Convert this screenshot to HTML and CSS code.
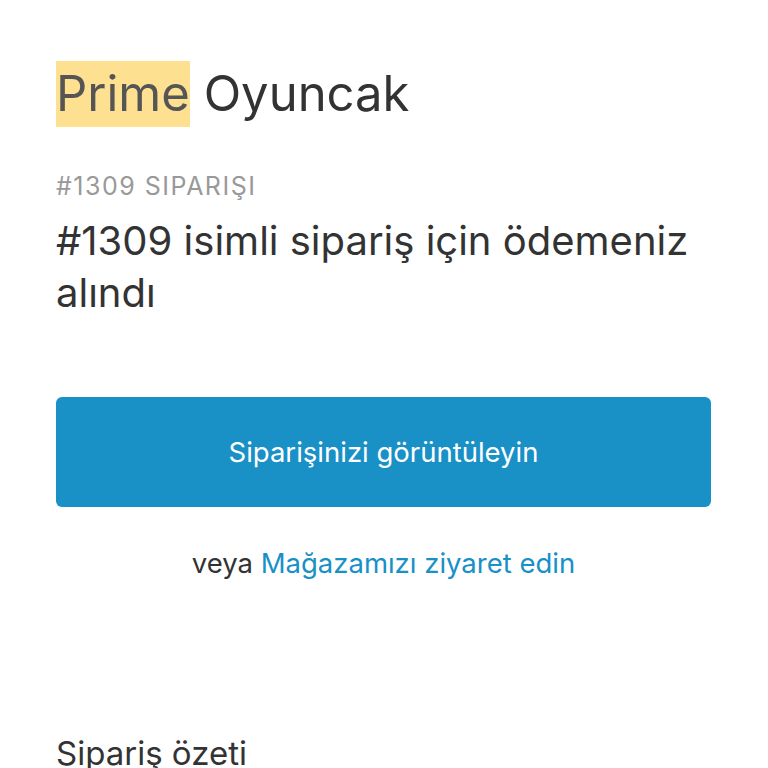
FILE: index.html
```html
<!DOCTYPE html>
<html lang="tr">
<head>
<meta charset="utf-8">
<link rel="stylesheet" href="styles.css">
</head>
<body>
<div class="page">
  <h1 class="shop"><span class="mark">Prime</span> Oyuncak</h1>
  <p class="order-no">#1309 SIPARIŞI</p>
  <h2 class="title">#1309 isimli sipariş için ödemeniz alındı</h2>
  <a class="btn" href="#">Siparişinizi görüntüleyin</a>
  <p class="alt">veya <a class="link" href="#">Mağazamızı ziyaret edin</a></p>
  <h3 class="summary">Sipariş özeti</h3>
</div>
</body>
</html>
```
FILE: styles.css
```css
html, body {
  margin: 0;
  padding: 0;
  background: #ffffff;
}
body {
  font-family: Inter, "Liberation Sans", sans-serif;
  color: #333333;
}
.page {
  padding: 61px 57px 0 56px;
  display: flex;
  flex-direction: column;
}
.shop {
  margin: 0;
  font-size: 49px;
  font-weight: 400;
  line-height: 66px;
  color: #333333;
}
.mark {
  background: #fde190;
  color: #555555;
  display: inline-block;
}
.order-no {
  margin: 44px 0 0 0;
  font-size: 25px;
  line-height: 30px;
  letter-spacing: 1.5px;
  color: #999999;
}
.title {
  margin: 14px 0 0 0;
  font-size: 40px;
  font-weight: 400;
  line-height: 52px;
  color: #333333;
}
.btn {
  margin-top: 78px;
  height: 110px;
  border-radius: 6px;
  background: #1990c6;
  color: #ffffff;
  text-decoration: none;
  font-size: 27.5px;
  display: flex;
  align-items: center;
  justify-content: center;
}
.alt {
  margin: 38px 0 0 0;
  text-align: center;
  font-size: 27.5px;
  line-height: 36px;
  color: #333333;
}
.link {
  color: #1990c6;
  text-decoration: none;
}
.summary {
  margin: 152px 0 0 0;
  font-size: 33px;
  font-weight: 400;
  line-height: 40px;
  color: #333333;
}
```
